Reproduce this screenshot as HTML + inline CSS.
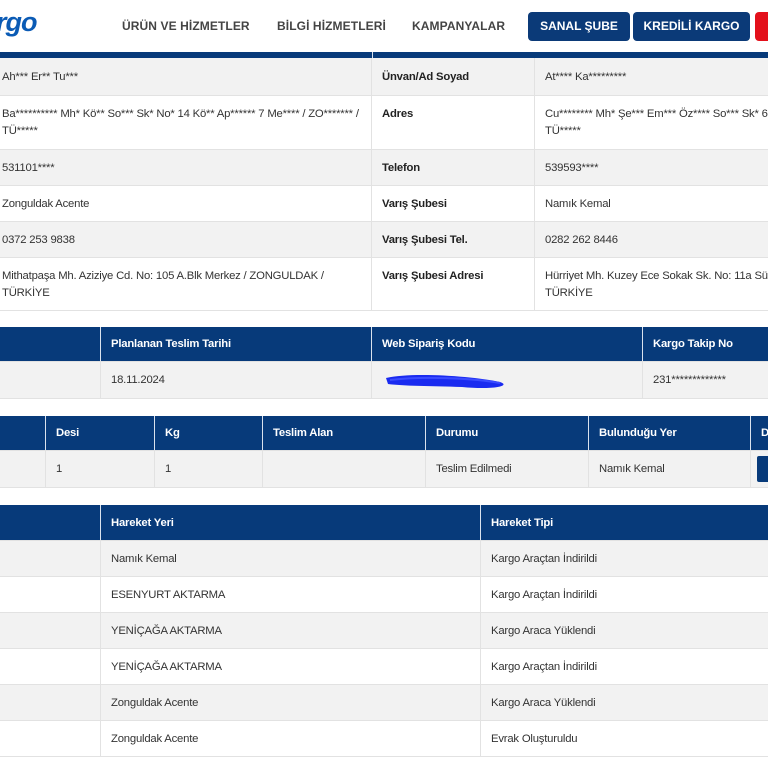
<!DOCTYPE html>
<html><head><meta charset="utf-8">
<style>
*{margin:0;padding:0;box-sizing:border-box}
body{width:768px;height:768px;overflow:hidden;background:#fff;font-family:"Liberation Sans",sans-serif;font-size:11.3px;color:#333;position:relative;letter-spacing:-0.2px}
.a{position:absolute}
.nav{font-size:12px;font-weight:bold;color:#444;top:19px;letter-spacing:0.1px}
.btn{background:#0b3a78;color:#fff;font-weight:bold;font-size:12px;border-radius:4px;top:12px;height:29px;line-height:29px;text-align:center;letter-spacing:0}
.row{position:absolute;left:0;width:768px;display:flex;border-bottom:1px solid #e2e2e2;overflow:hidden}
.row>div{border-right:1px solid #e2e2e2;padding:0 10px;display:flex;align-items:center;height:100%;flex-shrink:0;white-space:nowrap}
.g{background:#f2f2f2}
.h{background:#073a7a;color:#fff;font-weight:bold}
.h>div{border-right:1px solid #d9e2ee}
.b{font-weight:bold;color:#222}
.top{align-items:flex-start!important;padding-top:10px!important;line-height:17px}
</style></head><body>
<div class="a" style="left:-4px;top:7px;font-size:27px;font-weight:bold;font-style:italic;color:#0b5bb5;letter-spacing:-1px">rgo</div>
<div class="a nav" style="left:122px">ÜRÜN VE HİZMETLER</div>
<div class="a nav" style="left:277px">BİLGİ HİZMETLERİ</div>
<div class="a nav" style="left:412px">KAMPANYALAR</div>
<div class="a btn" style="left:528px;width:102px">SANAL ŞUBE</div>
<div class="a btn" style="left:633px;width:117px">KREDİLİ KARGO</div>
<div class="a" style="left:755px;top:12px;width:20px;height:29px;background:#e3101b;border-radius:4px"></div>

<div class="a" style="left:0;top:52px;width:768px;height:6px;background:#073a7a"></div>
<div class="a" style="left:372px;top:52px;width:1px;height:6px;background:#d9e2ee"></div>

<div class="row g" style="top:58px;height:38px"><div style="width:372px;padding-left:2px">Ah*** Er** Tu***</div><div class="b" style="width:163px">Ünvan/Ad Soyad</div><div style="width:300px">At**** Ka*********</div></div>
<div class="row" style="top:96px;height:54px"><div class="top" style="width:372px;padding-left:2px">Ba********** Mh* Kö** So*** Sk* No* 14 Kö** Ap****** 7 Me**** / ZO******* /<br>TÜ*****</div><div class="b top" style="width:163px">Adres</div><div class="top" style="width:300px">Cu******** Mh* Şe*** Em*** Öz**** So*** Sk* 6 S<br>TÜ*****</div></div>
<div class="row g" style="top:150px;height:36px"><div style="width:372px;padding-left:2px">531101****</div><div class="b" style="width:163px">Telefon</div><div style="width:300px">539593****</div></div>
<div class="row" style="top:186px;height:36px"><div style="width:372px;padding-left:2px">Zonguldak Acente</div><div class="b" style="width:163px">Varış Şubesi</div><div style="width:300px">Namık Kemal</div></div>
<div class="row g" style="top:222px;height:36px"><div style="width:372px;padding-left:2px">0372 253 9838</div><div class="b" style="width:163px">Varış Şubesi Tel.</div><div style="width:300px">0282 262 8446</div></div>
<div class="row" style="top:258px;height:53px"><div class="top" style="width:372px;padding-left:2px">Mithatpaşa Mh. Aziziye Cd. No: 105 A.Blk Merkez / ZONGULDAK /<br>TÜRKİYE</div><div class="b top" style="width:163px">Varış Şubesi Adresi</div><div class="top" style="width:300px">Hürriyet Mh. Kuzey Ece Sokak Sk. No: 11a Süleyman<br>TÜRKİYE</div></div>

<div class="row h" style="top:327px;height:35px"><div style="width:101px"></div><div style="width:271px">Planlanan Teslim Tarihi</div><div style="width:271px">Web Sipariş Kodu</div><div style="width:200px">Kargo Takip No</div></div>
<div class="row g" style="top:362px;height:37px"><div style="width:101px"></div><div style="width:271px">18.11.2024</div><div style="width:271px"><svg width="130" height="20" viewBox="0 0 130 20"><path d="M4 8 C30 2 90 6 118 12 C130 16 110 20 80 17 C50 16 20 16 6 14 Z" fill="#1a2bf0"/><path d="M8 10 C40 6 90 8 118 13" stroke="#3a4bff" stroke-width="2" fill="none"/></svg></div><div style="width:200px">231*************</div></div>

<div class="row h" style="top:416px;height:35px"><div style="width:46px"></div><div style="width:109px">Desi</div><div style="width:108px">Kg</div><div style="width:163px">Teslim Alan</div><div style="width:163px">Durumu</div><div style="width:162px">Bulunduğu Yer</div><div style="width:100px">D</div></div>
<div class="row g" style="top:451px;height:37px"><div style="width:46px"></div><div style="width:109px">1</div><div style="width:108px">1</div><div style="width:163px"></div><div style="width:163px">Teslim Edilmedi</div><div style="width:162px">Namık Kemal</div><div style="width:100px;padding:0 0 0 6px"><span style="display:block;width:20px;height:26px;background:#073a7a;border-radius:2px"></span></div></div>

<div class="row h" style="top:505px;height:36px"><div style="width:101px"></div><div style="width:380px">Hareket Yeri</div><div style="width:300px">Hareket Tipi</div></div>
<div class="row g" style="top:541px;height:36px"><div style="width:101px"></div><div style="width:380px">Namık Kemal</div><div style="width:300px">Kargo Araçtan İndirildi</div></div>
<div class="row" style="top:577px;height:36px"><div style="width:101px"></div><div style="width:380px">ESENYURT AKTARMA</div><div style="width:300px">Kargo Araçtan İndirildi</div></div>
<div class="row g" style="top:613px;height:36px"><div style="width:101px"></div><div style="width:380px">YENİÇAĞA AKTARMA</div><div style="width:300px">Kargo Araca Yüklendi</div></div>
<div class="row" style="top:649px;height:36px"><div style="width:101px"></div><div style="width:380px">YENİÇAĞA AKTARMA</div><div style="width:300px">Kargo Araçtan İndirildi</div></div>
<div class="row g" style="top:685px;height:36px"><div style="width:101px"></div><div style="width:380px">Zonguldak Acente</div><div style="width:300px">Kargo Araca Yüklendi</div></div>
<div class="row" style="top:721px;height:36px"><div style="width:101px"></div><div style="width:380px">Zonguldak Acente</div><div style="width:300px">Evrak Oluşturuldu</div></div>
</body></html>
